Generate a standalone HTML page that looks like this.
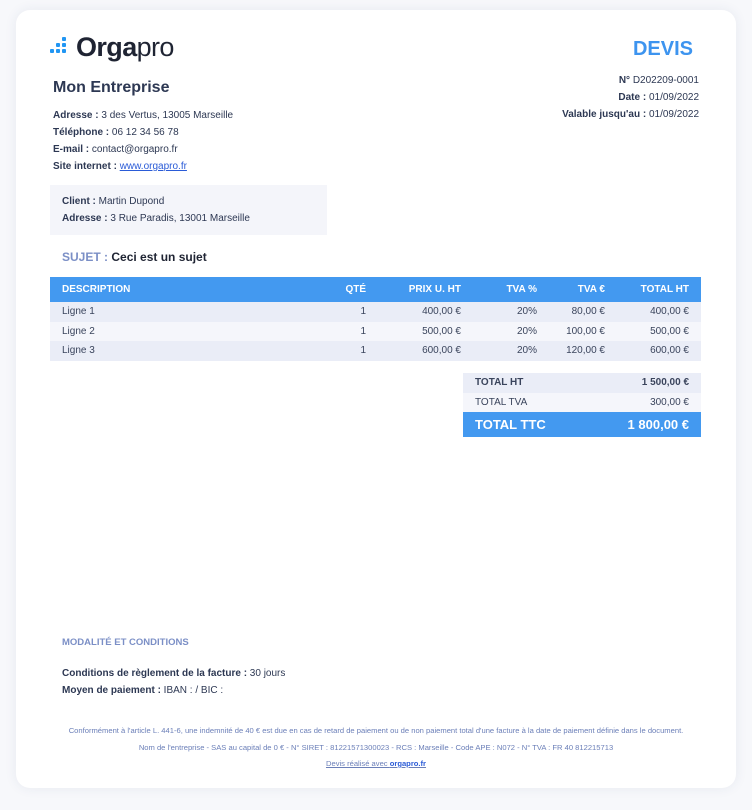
<!DOCTYPE html>
<html><head><meta charset="utf-8">
<style>
*{margin:0;padding:0;box-sizing:border-box}
body{width:752px;height:810px;background:#f7f8fb;font-family:"Liberation Sans",sans-serif;color:#2d3853;position:relative;overflow:hidden}
.card{position:absolute;left:16px;top:10px;width:720px;height:778px;background:#fff;border-radius:14px;box-shadow:0 0 12px rgba(40,60,120,0.08)}
.a{position:absolute;white-space:nowrap}
.s{font-size:10px;line-height:17px}
b{font-weight:bold}
.dot{position:absolute;width:4px;height:4px;background:#2196f3;border-radius:1px}
table{border-collapse:collapse;font-size:10px;table-layout:fixed}
.it{position:absolute;left:50px;top:277px;width:651px}
.it td,.it th{height:19.5px;padding:0 12px}
.it th{background:#4399f0;color:#fff;font-weight:bold;height:25px;text-align:right}
.it td{text-align:right;color:#3a445c}
.it .l{text-align:left}
.r1{background:#eaedf7}.r2{background:#f5f6fb}
.tt{position:absolute;left:463px;top:373px;width:238px}
.tt td{height:19.5px;padding:0 12px;color:#3a445c}
.tt .big td{background:#4399f0;color:#fff;font-weight:bold;font-size:13px;height:25px}
.c{text-align:center;color:#6b7fb8;font-size:7.6px;width:720px;left:16px}
</style></head><body>
<div class="card"></div>
<div class="dot" style="left:50px;top:49px"></div>
<div class="dot" style="left:56px;top:49px"></div>
<div class="dot" style="left:56px;top:43px"></div>
<div class="dot" style="left:62px;top:49px"></div>
<div class="dot" style="left:62px;top:43px"></div>
<div class="dot" style="left:62px;top:37px"></div>
<div class="a" style="left:76px;top:31px;font-size:27px;line-height:32px;color:#1f2433;letter-spacing:-0.6px"><b>Orga</b><span style="font-weight:normal">pro</span></div>
<div class="a" style="left:53px;top:79px;font-size:16px;font-weight:bold;color:#2d3853">Mon Entreprise</div>
<div class="a s" style="left:53px;top:107px"><b>Adresse :</b> 3 des Vertus, 13005 Marseille</div>
<div class="a s" style="left:53px;top:124px"><b>Téléphone :</b> 06 12 34 56 78</div>
<div class="a s" style="left:53px;top:141px"><b>E-mail :</b> contact@orgapro.fr</div>
<div class="a s" style="left:53px;top:158px"><b>Site internet :</b> <span style="color:#2a5bd7;text-decoration:underline">www.orgapro.fr</span></div>
<div class="a" style="right:59px;top:38px;font-size:20px;font-weight:bold;color:#3d94ef">DEVIS</div>
<div class="a s" style="right:53px;top:72px;text-align:right"><b>N°</b> D202209-0001</div>
<div class="a s" style="right:53px;top:89px;text-align:right"><b>Date :</b> 01/09/2022</div>
<div class="a s" style="right:53px;top:106px;text-align:right"><b>Valable jusqu'au :</b> 01/09/2022</div>
<div class="a" style="left:50px;top:185px;width:277px;height:50px;background:#f4f5fa"></div>
<div class="a s" style="left:62px;top:193px"><b>Client :</b> Martin Dupond</div>
<div class="a s" style="left:62px;top:210px"><b>Adresse :</b> 3 Rue Paradis, 13001 Marseille</div>
<div class="a" style="left:62px;top:250px;font-size:12px;font-weight:bold"><span style="color:#7b8fc6">SUJET :</span> <span style="color:#1f2433">Ceci est un sujet</span></div>
<table class="it">
<colgroup><col style="width:268px"><col style="width:60px"><col style="width:95px"><col style="width:76px"><col style="width:68px"><col style="width:84px"></colgroup>
<tr><th class="l">DESCRIPTION</th><th>QTÉ</th><th>PRIX U. HT</th><th>TVA %</th><th>TVA €</th><th>TOTAL HT</th></tr>
<tr class="r1"><td class="l">Ligne 1</td><td>1</td><td>400,00 €</td><td>20%</td><td>80,00 €</td><td>400,00 €</td></tr>
<tr class="r2"><td class="l">Ligne 2</td><td>1</td><td>500,00 €</td><td>20%</td><td>100,00 €</td><td>500,00 €</td></tr>
<tr class="r1"><td class="l">Ligne 3</td><td>1</td><td>600,00 €</td><td>20%</td><td>120,00 €</td><td>600,00 €</td></tr>
</table>
<table class="tt">
<tr class="r1"><td><b>TOTAL HT</b></td><td style="text-align:right"><b>1 500,00 €</b></td></tr>
<tr class="r2"><td>TOTAL TVA</td><td style="text-align:right">300,00 €</td></tr>
<tr class="big"><td>TOTAL TTC</td><td style="text-align:right">1 800,00 €</td></tr>
</table>
<div class="a" style="left:62px;top:637px;font-size:9.5px;font-weight:bold;color:#7b8fc6">MODALITÉ ET CONDITIONS</div>
<div class="a s" style="left:62px;top:665px"><b>Conditions de règlement de la facture :</b> 30 jours</div>
<div class="a s" style="left:62px;top:682px"><b>Moyen de paiement :</b> IBAN : / BIC :</div>
<div class="a c" style="top:726px">Conformément à l'article L. 441-6, une indemnité de 40 € est due en cas de retard de paiement ou de non paiement total d'une facture à la date de paiement définie dans le document.</div>
<div class="a c" style="top:743px">Nom de l'entreprise - SAS au capital de 0 € - N° SIRET : 81221571300023 - RCS : Marseille - Code APE : N072 - N° TVA : FR 40 812215713</div>
<div class="a c" style="top:759px"><span style="text-decoration:underline">Devis réalisé avec <b style="color:#2a5bd7">orgapro.fr</b></span></div>
</body></html>
